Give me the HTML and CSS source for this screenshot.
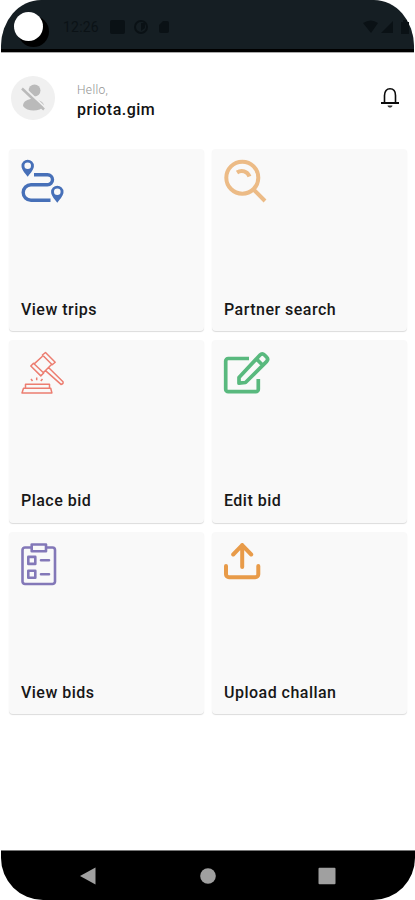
FILE: index.html
```html
<!DOCTYPE html>
<html lang="en">
<head>
<meta charset="utf-8">
<title>Home</title>
<link rel="stylesheet" href="styles.css">
</head>
<body>
<div class="phone">
  <div class="status">
    <span class="camera"></span>
    <span class="clock">12:26</span>
    <svg class="status-left" width="64" height="16" viewBox="0 0 64 16"><rect x="1" y="1" width="15" height="14" rx="2"/><circle cx="32" cy="8" r="6" fill="none" stroke="#0a1115" stroke-width="2"/><path d="M32 4h4v5l-4 3z"/><path d="M50 6l4-4h4q2 0 2 2v8q0 2-2 2h-6q-2 0-2-2z"/></svg>
    <svg class="status-right" width="48" height="16" viewBox="0 0 48 16"><path d="M1 4q8-5 15 0L9 14zM31 2v12H19z"/><path d="M39 3h2V1h4v2h2v12h-8z"/></svg>
  </div>
  <header class="header">
    <span class="avatar"><svg width="44" height="44" viewBox="0 0 44 44"><circle cx="23.500" cy="14.500" r="6"/><path d="M12 30c0-5 5-7 9-7s12 2 12 7c-4 6-17 6-21 0z"/><path d="M12.500 11l22 21" stroke="#f0f0f0" stroke-width="2"/><path d="M11 12.500l22 21" stroke="#bababa" stroke-width="2.500"/></svg></span>
    <div class="who"><span class="hello">Hello,</span><span class="name">priota.gim</span></div>
    <svg class="bell" width="22" height="24" viewBox="0 0 22 24"><path d="M5.500 16V9.500C5.500 5 7.800 2.800 11 2.800s5.500 2.200 5.500 6.700V16" fill="none" stroke="#0a0a0a" stroke-width="1.600"/><path d="M2 17h18" stroke="#0a0a0a" stroke-width="2"/><path d="M8.500 19.500h5c-.4 2.700-4.600 2.700-5 0z" fill="#333"/></svg>
  </header>
  <main class="grid">
    <section class="card">
      <svg class="icon trips" viewBox="0 0 48 46"><path d="M14 15.700h13.500a4.900 4.900 0 0 1 0 10H11a7.800 7.800 0 0 0 0 15.600h19.500"/><path class="solid" fill-rule="evenodd" d="M7.700 17.700C4 13.200 1.500 10 1.500 7a6.200 6.200 0 0 1 12.400 0c0 3-2.500 6.200-6.200 10.700zM7.700 3.500a3.300 3.300 0 1 0 0 6.600 3.300 3.300 0 0 0 0-6.600zM37.300 43.700c-3.700-4.500-6.200-7.700-6.200-10.700a6.200 6.200 0 0 1 12.400 0c0 3-2.500 6.200-6.200 10.700zM37.300 29.500a3.300 3.300 0 1 0 0 6.600 3.300 3.300 0 0 0 0-6.600z"/></svg>
      <h2>View trips</h2>
    </section>
    <section class="card">
      <svg class="icon search" viewBox="0 0 48 46"><circle cx="19.300" cy="18.700" r="16"/><path d="M30.500 30.500L42 42M14 13.500c4.500-3 10.500-1.500 12.500 4"/></svg>
      <h2>Partner search</h2>
    </section>
    <section class="card">
      <svg class="icon gavel" viewBox="0 0 48 46"><path d="M25.500 1.500l9.700 9.700-3 2.600-9.800-9.800zM13.500 12.200l10.200 9.800-2.900 2.900-10-9.900zM22.500 5.200l-8.300 7.700M31.500 13.500l-8 8M28.500 16.500l14.500 14.200q.7 2.300-2 2.700L25.500 19.600M5.500 33.200h24v4h-24zM3.500 37.200h27.200l1.200 4.700H2zM11 28l1.500 2M16.700 26.500v2.800M22.500 28l-1.700 2"/></svg>
      <h2>Place bid</h2>
    </section>
    <section class="card">
      <svg class="icon edit" viewBox="0 0 48 46"><path d="M26 7.500H5.200a2.500 2.500 0 0 0-2.500 2.500v28.200a2.500 2.500 0 0 0 2.500 2.500h27.600a2.500 2.500 0 0 0 2.500-2.500V28M16 32.200v-5.700L37 4q2.200-2.300 4.500 0l2 2q2.300 2.300 0 4.600L22.500 31.500zM33.500 8l6.500 6.500"/></svg>
      <h2>Edit bid</h2>
    </section>
    <section class="card">
      <svg class="icon list" viewBox="0 0 48 46"><path d="M11.700 5.500H5a2.500 2.500 0 0 0-2.500 2.500v31.500A2.500 2.500 0 0 0 5 42h27.500a2.500 2.500 0 0 0 2.500-2.500V8a2.500 2.500 0 0 0-2.500-2.500H26M11.700 2.500H26v6.700H11.700zM8.300 14.900h7v7h-7zM8.300 28.700h7v7h-7zM21 18.300h8M21 32.200h8"/></svg>
      <h2>View bids</h2>
    </section>
    <section class="card">
      <svg class="icon upload" viewBox="0 0 48 46"><path d="M19.200 25V3M10.200 12.500l9-9.300 9 9.300M3 24v8.200a3 3 0 0 0 3 3h26.300a3 3 0 0 0 3-3V24"/></svg>
      <h2>Upload challan</h2>
    </section>
  </main>
  <nav class="nav">
    <svg width="18" height="18" viewBox="0 0 18 18"><path d="M1 9L16.500.5v17z"/></svg>
    <svg width="18" height="18" viewBox="0 0 18 18"><circle cx="9" cy="9" r="7.800"/></svg>
    <svg width="18" height="18" viewBox="0 0 18 18"><rect x=".5" y=".8" width="17" height="16.500" rx="1"/></svg>
  </nav>
</div>
</body>
</html>
```
FILE: styles.css
```css
* { box-sizing: border-box; }
body { margin: 0; background: #fff; font-family: Roboto, "Liberation Sans", sans-serif; }
.phone { width: 415px; height: 900px; display: flex; flex-direction: column; overflow: hidden; }
svg { display: block; flex: none; }
.status { height: 52px; flex: none; display: flex; align-items: flex-start; background: #151e23; border-bottom: 3px solid #000; border-radius: 40px 40px 0 0 / 46px 46px 0 0; box-shadow: 0 1px 0 #aaa; margin: 0 1px; }
.camera { width: 29px; height: 29px; flex: none; margin: 12px 0 0 13px; border-radius: 50%; background: #fff; box-shadow: 5px 5px 0 1px #000; }
.clock { margin: 17px 0 0 20px; width: 46px; font-size: 14px; line-height: 20px; letter-spacing: .2px; color: #0b1216; }
.status-left, .status-right { margin-top: 19px; fill: #0a1115; }
.status-right { margin-left: auto; margin-right: 4px; }
.header { height: 96.5px; flex: none; display: flex; align-items: flex-start; padding: 24px 14px 0 11px; }
.avatar { width: 44px; height: 44px; border-radius: 50%; background: #f0f0f0; }
.avatar svg { fill: #bababa; }
.who { display: flex; flex-direction: column; margin: 7px auto 0 22px; }
.hello { font-size: 12px; line-height: 15px; color: #929292; font-weight: 300; letter-spacing: .35px; }
.name { font-size: 16px; line-height: 24px; font-weight: 500; color: #111; letter-spacing: .5px; }
.bell { margin-top: 10px; }
.grid { flex: none; display: grid; grid-template-columns: 195px 195px; grid-auto-rows: 182.5px; gap: 9px 8px; padding-left: 9px; }
.card { display: flex; flex-direction: column; justify-content: space-between; background: #f9f9f9; border-radius: 4px; box-shadow: 0 1px 1px #dcdcdc; padding: 10.5px 12px 10.5px 11px; }
.card h2 { margin: 0 0 0 1px; font-size: 16px; line-height: 22px; font-weight: 500; color: #171717; letter-spacing: .48px; }
.icon { width: 48px; height: 46px; fill: none; stroke: currentColor; stroke-width: 3.4; }
.icon .solid { fill: currentColor; stroke: none; }
.trips { color: #4770b8; }
.search { color: #ecbb86; stroke-width: 4; }
.gavel { color: #ec7d70; stroke-width: 1.5; stroke-linejoin: round; }
.edit { color: #59b97e; stroke-width: 3.7; stroke-linejoin: round; }
.list { color: #8378b8; stroke-width: 2.6; stroke-linecap: round; stroke-linejoin: round; }
.upload { color: #e89b49; stroke-width: 4; stroke-linecap: round; stroke-linejoin: round; }
.nav { height: 50px; flex: none; margin: auto 0 0 1px; padding: 0 79px 0 78px; display: flex; align-items: center; justify-content: space-between; background: #000; border-top: 1px solid #777; border-radius: 0 0 42px 42px; }
.nav svg { fill: #a0a0a0; }
```
